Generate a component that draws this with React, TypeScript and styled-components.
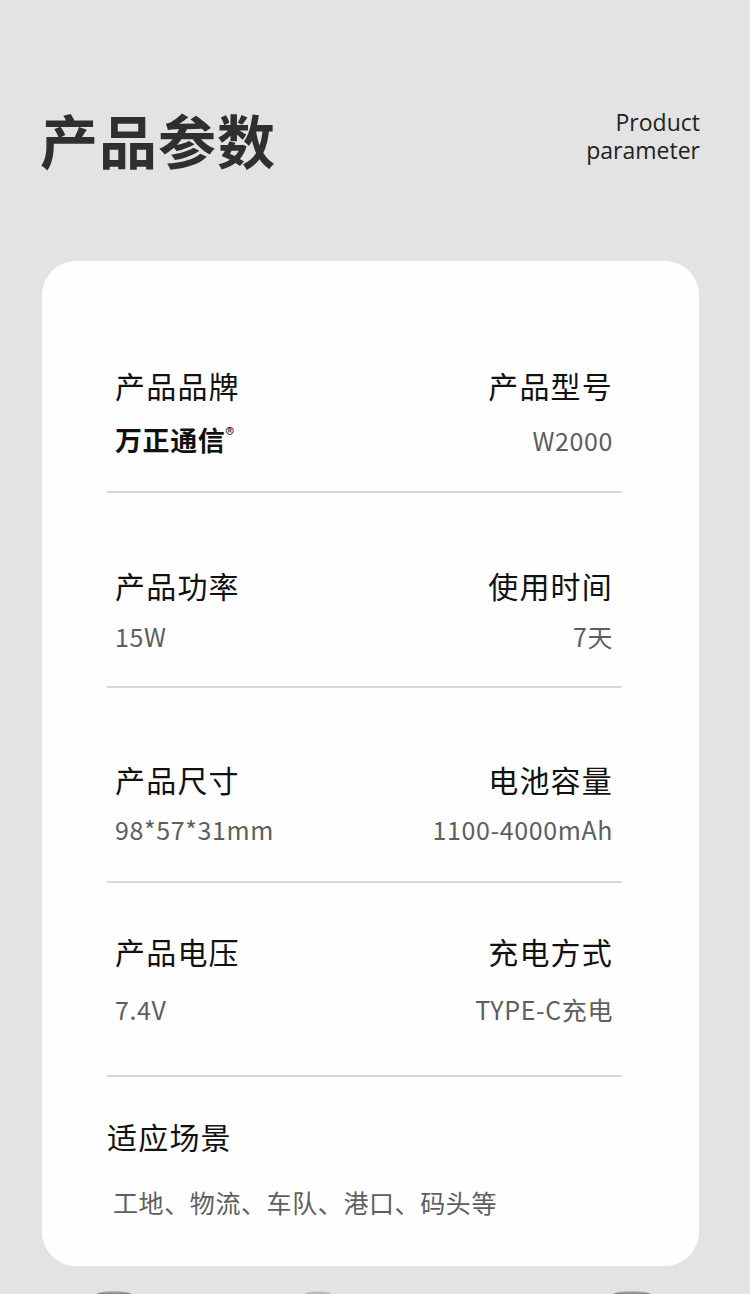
import React from 'react';
import styled, {createGlobalStyle} from 'styled-components';

const GlobalStyle = createGlobalStyle`
  html, body {
    margin: 0;
    padding: 0;
    background: #e3e3e3;
  }
  body {
    font-family: "Noto Sans CJK SC", "Noto Sans", sans-serif;
  }
`;

const Page = styled.div`
  width: 750px;
  height: 1294px;
  overflow: hidden;
  background: #e3e3e3;
  display: flex;
  flex-direction: column;
`;

const Header = styled.header`
  display: flex;
  justify-content: space-between;
  align-items: flex-start;
  padding: 104px 50px 0 40px;
  height: 157px;
  box-sizing: border-box;
  > h1 {
    margin: 0;
    font-size: 58px;
    line-height: 70px;
    font-weight: 700;
    color: #2f2f2f;
    letter-spacing: 1px;
  }
`;

const EnTitle = styled.div`
  margin-top: 4px;
  display: flex;
  flex-direction: column;
  align-items: flex-end;
  font-family: "Open Sans", "Noto Sans", sans-serif;
  font-size: 23px;
  line-height: 28px;
  color: #222;
  > span {
    display: block;
    height: 28px;
  }
`;

const Card = styled.section`
  margin: 104px 0 0 42px;
  width: 657px;
  height: 1005px;
  box-sizing: border-box;
  background: #fefefe;
  border-radius: 34px;
  padding: 0 77px 0 65px;
  display: flex;
  flex-direction: column;
`;

const Row = styled.div<{pt: number; pb: number; gap: number}>`
  display: grid;
  grid-template-columns: 1fr 1fr;
  row-gap: ${p => p.gap}px;
  padding: ${p => p.pt}px 9px ${p => p.pb}px 8px;
  border-bottom: 2px solid #d8d8d8;
  > div:nth-child(even) {
    text-align: right;
  }
`;

const Label = styled.div`
  font-size: 30px;
  line-height: 40px;
  color: #111;
  letter-spacing: 1.2px;
`;

const Value = styled.div<{strong?: boolean}>`
  font-size: ${p => (p.strong ? 27 : 25)}px;
  line-height: 32px;
  color: ${p => (p.strong ? '#111' : '#5e5e5e')};
  font-weight: ${p => (p.strong ? 700 : 400)};
  letter-spacing: 0.6px;
  sup {
    font-size: 18px;
    font-weight: 400;
    vertical-align: 10px;
    line-height: 0;
  }
`;

const Scene = styled.div`
  padding-top: 39px;
  > .title {
    font-size: 30px;
    line-height: 40px;
    color: #111;
    letter-spacing: 1.2px;
  }
  > .list {
    margin-top: 30px;
    padding-left: 6px;
    font-size: 25px;
    line-height: 32px;
    letter-spacing: 0.6px;
    color: #5e5e5e;
  }
`;

const Peek = styled.div`
  flex: 1;
  display: flex;
  align-items: flex-end;
  > span {
    display: block;
    height: 3px;
    border-radius: 50% 50% 0 0 / 100% 100% 0 0;
    background: linear-gradient(#bdbdbd, #808080);
  }
`;

const rows = [
  {l1: '产品品牌', l2: '产品型号', v1: '万正通信', v2: 'W2000', pt: 104, gap: 19, pb: 35, brand: true},
  {l1: '产品功率', l2: '使用时间', v1: '15W', v2: '7天', pt: 72, gap: 15, pb: 34},
  {l1: '产品尺寸', l2: '电池容量', v1: '98*57*31mm', v2: '1100-4000mAh', pt: 71, gap: 14, pb: 36},
  {l1: '产品电压', l2: '充电方式', v1: '7.4V', v2: 'TYPE-C充电', pt: 48, gap: 22, pb: 50},
];

export default function App() {
  return (
    <Page>
      <GlobalStyle />
      <Header>
        <h1>产品参数</h1>
        <EnTitle>
          <span>Product</span>
          <span>parameter</span>
        </EnTitle>
      </Header>
      <Card>
        {rows.map(r => (
          <Row key={r.l1} pt={r.pt} pb={r.pb} gap={r.gap}>
            <Label>{r.l1}</Label>
            <Label>{r.l2}</Label>
            {r.brand ? (
              <Value strong>
                {r.v1}
                <sup>®</sup>
              </Value>
            ) : (
              <Value>{r.v1}</Value>
            )}
            <Value>{r.v2}</Value>
          </Row>
        ))}
        <Scene>
          <div className="title">适应场景</div>
          <div className="list">工地、物流、车队、港口、码头等</div>
        </Scene>
      </Card>
      <Peek>
        <span style={{marginLeft: 97, width: 34}} />
        <span style={{marginLeft: 174, width: 26, opacity: 0.5}} />
        <span style={{marginLeft: 283, width: 36}} />
      </Peek>
    </Page>
  );
}
